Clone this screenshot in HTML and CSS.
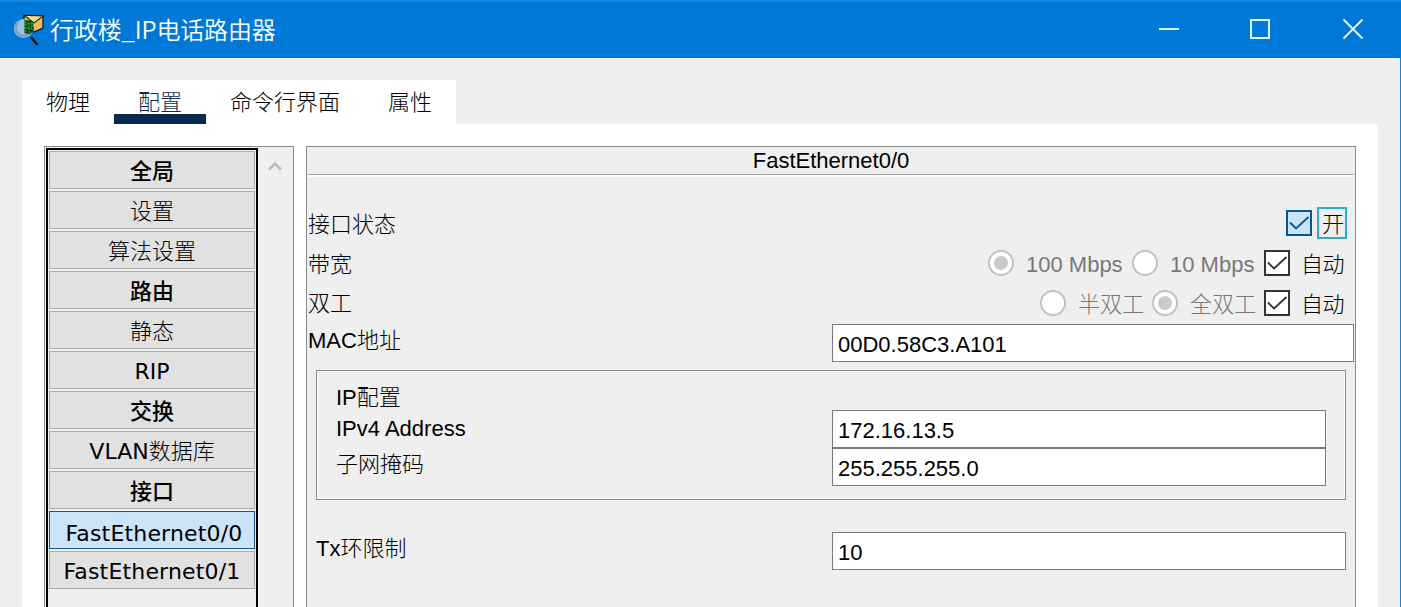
FILE: index.html
```html
<!DOCTYPE html>
<html lang="zh-CN">
<head>
<meta charset="utf-8">
<title>行政楼_IP电话路由器</title>
<link rel="stylesheet" href="styles.css">
</head>
<body>
<div class="window">
  <header class="titlebar">
    <svg class="logo" width="32" height="32" viewBox="0 0 32 32">
      <path d="M10 1.500l19 0.500v12l-9 4-10-4z" fill="#e8bd6a" stroke="#17150f" stroke-width="1.300"/>
      <path d="M11 2l9 7 8.500-6.500" fill="#f7dc95" stroke="#3a2a12" stroke-width="1.200"/>
      <circle cx="9.500" cy="14.500" r="9" fill="#719fc4" stroke="#8fb2cf" stroke-width="1.200"/>
      <path d="M4 8.500q5-5 7-2v14q-7 1-8-6z" fill="#9ec3e2"/>
      <path d="M10.500 6l8 1 1.500 9-4 4-5.500-1z" fill="#093b10"/>
      <path d="M12 7v12M15 8v11M18 8v8M10 10h9M10 14h9" stroke="#21c636" stroke-width="1" stroke-dasharray="2 1"/>
      <path d="M17 23l6.500 8" stroke="#101820" stroke-width="2.600"/>
    </svg>
    <h1 class="title">行政楼_IP电话路由器</h1>
    <svg class="controls" width="206" height="22" viewBox="0 0 206 22" fill="none" stroke="#e6fbff" stroke-width="2">
      <path d="M0 11h20"/>
      <rect x="92" y="2" width="18" height="18"/>
      <path d="M184.500 1.500l19 19M203.500 1.500l-19 19" stroke-width="1.800"/>
    </svg>
  </header>
  <nav class="tabs">
    <div class="tab">物理</div>
    <div class="tab active">配置</div>
    <div class="tab">命令行界面</div>
    <div class="tab">属性</div>
  </nav>
  <main class="page">
    <aside class="sidebar">
      <div class="list">
        <div class="item head">全局</div>
        <div class="item">设置</div>
        <div class="item">算法设置</div>
        <div class="item head">路由</div>
        <div class="item">静态</div>
        <div class="item latin">RIP</div>
        <div class="item head">交换</div>
        <div class="item"><span class="latin">VLAN</span>数据库</div>
        <div class="item head">接口</div>
        <div class="item latin port selected">FastEthernet0/0</div>
        <div class="item latin port">FastEthernet0/1</div>
      </div>
      <svg class="arrow" width="14" height="10" viewBox="0 0 14 10"><path d="M1 8.500L7 2.800l6 5.700" fill="none" stroke="#bcbcbc" stroke-width="2.600"/></svg>
    </aside>
    <section class="panel">
      <h2 class="panel-title">FastEthernet0/0</h2>
      <div class="row status">
        <span class="label">接口状态</span>
        <svg class="check on" viewBox="2 2 22 22"><path d="M4 12.500l6 6L22.500 7"/></svg>
        <span class="focus">开</span>
      </div>
      <div class="row">
        <span class="label">带宽</span>
        <i class="radio dot"></i><span class="option speed">100 Mbps</span>
        <i class="radio"></i><span class="option tens">10 Mbps</span>
        <svg class="check" viewBox="2 2 22 22"><path d="M4 12.500l6 6L22.500 7"/></svg>
        <span class="auto">自动</span>
      </div>
      <div class="row duplex">
        <span class="label">双工</span>
        <i class="radio"></i><span class="option mode">半双工</span>
        <i class="radio dot"></i><span class="option mode">全双工</span>
        <svg class="check" viewBox="2 2 22 22"><path d="M4 12.500l6 6L22.500 7"/></svg>
        <span class="auto">自动</span>
      </div>
      <div class="field mac">
        <span class="label">MAC地址</span>
        <div class="input">00D0.58C3.A101</div>
      </div>
      <div class="group">
        <div class="group-labels">
          <span>IP配置</span>
          <span>IPv4 Address</span>
          <span>子网掩码</span>
        </div>
        <div class="group-inputs">
          <div class="input">172.16.13.5</div>
          <div class="input">255.255.255.0</div>
        </div>
      </div>
      <div class="field ring">
        <span class="label">Tx环限制</span>
        <div class="input">10</div>
      </div>
    </section>
  </main>
</div>
</body>
</html>
```
FILE: styles.css
```css
* { box-sizing: border-box; }
body {
  margin: 0;
  height: 607px;
  overflow: hidden;
  background: #efefef;
  color: #000;
  font: 22px/30px "Liberation Sans", "Noto Sans CJK SC", sans-serif;
  font-weight: 300;
  white-space: nowrap;
}
.window {
  display: flex;
  flex-direction: column;
  height: 607px;
  border-right: 1px solid #1a83d4;
}
.titlebar {
  display: flex;
  align-items: center;
  height: 58px;
  margin-right: -1px;
  padding: 0 36px 0 14px;
  background: #0078d7;
  border-top: 2px solid #1a86db;
}
.logo { margin-right: 4px; }
.title {
  flex: 1;
  margin: 0 0 3px;
  color: #fff;
  font: 350 24px/34px "Noto Sans CJK SC", sans-serif;
  letter-spacing: -0.15px;
}
.controls { margin-bottom: 2px; }
.tabs {
  display: flex;
  align-self: flex-start;
  height: 44px;
  margin: 22px 0 0 22px;
  background: #fff;
}
.tab { padding: 8px 24px 0; height: 44px; }
.tab.active { color: #102a50; border-bottom: 10px solid #0c2850; }
.page {
  display: flex;
  flex: 1;
  gap: 12px;
  min-height: 0;
  margin: 0 22px;
  padding: 22px 22px 0;
  background: #fff;
}
.sidebar {
  display: flex;
  width: 250px;
  padding: 1px 0 0 1px;
  background: #efefef;
  border: 1px solid #8a8a8a;
  border-bottom: 0;
}
.list {
  display: flex;
  flex-direction: column;
  gap: 2px;
  width: 212px;
  padding: 1px;
  border: 2px solid #000;
  border-bottom: 0;
  overflow: hidden;
}
.item {
  flex: none;
  height: 38px;
  padding-top: 1px;
  background: #e1e1e1;
  border: 1px solid #adadad;
  font: 300 22px/38px "DejaVu Sans", "Noto Sans CJK SC", sans-serif;
  text-align: center;
}
.item.head { font-weight: 500; font-family: "Noto Sans CJK SC", sans-serif; line-height: 32px; }
.latin { font-weight: 400; }
.item.latin { font-weight: 400; }
.item.port { letter-spacing: 0.17px; }
.item.selected {
  padding: 3px 0 0 4px;
  background: #cce4f7;
  border-color: #15548f;
}
.arrow { margin: 13px 0 0 10px; }
.panel {
  flex: 1;
  background: #efefef;
  border: 1px solid #8a8a8a;
  border-bottom: 0;
}
.panel-title {
  height: 30px;
  margin: 0 1px 27px;
  font: 400 22px/27px "Liberation Sans", sans-serif;
  text-align: center;
  border-bottom: 2px solid #fff;
  box-shadow: inset 0 -1px #a0a0a0;
}
.row {
  display: flex;
  align-items: center;
  height: 40px;
  padding: 0 8px 0 1px;
}
.row .label { flex: 1; padding-top: 4px; }
.row.status { height: 39px; padding-bottom: 1px; }
.row.duplex .label { padding-top: 2px; }
.check {
  width: 26px;
  height: 26px;
  background: #fff;
  border: 2px solid #333;
}
.check path { fill: none; stroke: #333; stroke-width: 1.8; }
.check.on { background: #cce4f7; border-color: #0a5494; }
.check.on path { stroke: #0a5494; }
.focus {
  width: 30px;
  height: 32px;
  margin-left: 5px;
  padding-left: 3px;
  border: 2px solid #2eaec8;
  line-height: 31px;
}
.radio {
  display: grid;
  place-items: center;
  width: 26px;
  height: 26px;
  background: #fff;
  border: 2px solid #c3c3c3;
  border-radius: 50%;
}
.radio.dot::after {
  content: "";
  width: 14px;
  height: 14px;
  background: #cacaca;
  border-radius: 50%;
}
.option { padding: 3px 0 0 12px; color: #787878; }
.speed { width: 118px; }
.tens { width: 106px; }
.mode { width: 86px; }
.auto { width: 57px; padding: 3px 0 0 11px; letter-spacing: -0.5px; }
.field {
  display: grid;
  grid-template-columns: 525px 1fr;
  height: 38px;
}
.mac { margin: 1px 1px 8px 0; }
.mac .label { padding: 2px 0 0 1px; }
.input {
  height: 38px;
  padding-left: 5px;
  background: #fff;
  border: 1px solid #7a7a7a;
  line-height: 39px;
}
.group {
  display: grid;
  grid-template-columns: 515px 1fr;
  height: 130px;
  margin: 0 9px 32px;
  border: 1px solid #8a8a8a;
  box-shadow: inset 0 0 0 1px #fafafa;
}
.group-labels {
  display: grid;
  grid-template-rows: 31px 36px 36px;
  padding: 12px 0 0 19px;
}
.group-inputs { padding: 39px 19px 0 0; }
.ring { margin-right: 9px; padding-left: 0; }
.ring .label { padding: 2px 0 0 9px; }
```
